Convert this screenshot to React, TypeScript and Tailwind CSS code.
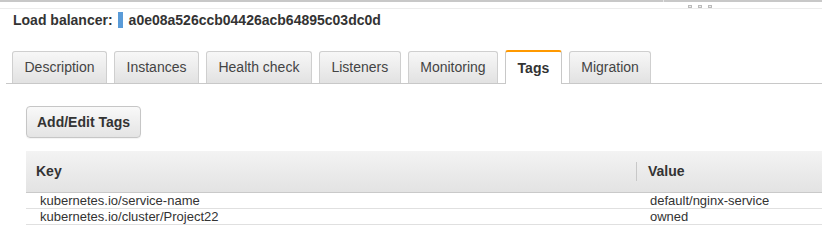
const tabs = ['Description', 'Instances', 'Health check', 'Listeners', 'Monitoring', 'Tags', 'Migration'];

const tags = [
  { key: 'kubernetes.io/service-name', value: 'default/nginx-service' },
  { key: 'kubernetes.io/cluster/Project22', value: 'owned' },
];

export default function App() {
  const active = 'Tags';

  return (
    <div className="w-[822px] h-[247px] overflow-hidden bg-white text-[#333] font-['Liberation_Sans',Arial,sans-serif]">
      {/* top strip with resize grip */}
      <div className="relative h-[9px] border-t-2 border-b border-t-[#c8c8c8] border-b-[#ececec]">
        <div className="absolute left-[663px] -top-[2px] w-px h-[2px] bg-[#e6e6e6]" />
        <div className="absolute left-[688px] top-[3px] flex gap-[6px]">
          <span className="w-[4px] h-[3px] border border-[#bbb] bg-[#eee]" />
          <span className="w-[4px] h-[3px] border border-[#bbb] bg-[#eee]" />
          <span className="w-[4px] h-[3px] border border-[#bbb] bg-[#eee]" />
        </div>
      </div>

      {/* header */}
      <div className="flex items-center h-[22px] pl-[13px] text-[14px] font-bold text-[#333]">
        <span>Load balancer:</span>
        <span className="ml-[5px] w-[5px] h-[16px] bg-[#5a9bd8]" />
        <span className="ml-[6px]">a0e08a526ccb04426acb64895c03dc0d</span>
      </div>

      {/* tabs */}
      <div className="mt-[20px] ml-[6px] pl-[6px] flex items-end gap-[7px] border-b border-[#c8c8c8] h-[33px]">
        {tabs.map((t) =>
          t === active ? (
            <div
              key={t}
              className="h-[34px] -mb-px px-[11.5px] flex items-center bg-white border border-[#c8c8c8] border-t-2 border-t-[#f90] border-b-0 rounded-t-[3px] text-[14px] font-bold text-[#333]"
            >
              {t}
            </div>
          ) : (
            <div
              key={t}
              className="h-[32px] px-[11.5px] flex items-center bg-gradient-to-b from-[#f7f7f7] to-[#e2e2e2] border border-[#cfcfcf] border-b-0 rounded-t-[3px] text-[14px] text-[#444]"
            >
              {t}
            </div>
          )
        )}
      </div>

      {/* content */}
      <div className="pl-[26px]">
        <button className="mt-[22px] h-[32px] px-[10px] rounded-[4px] border border-[#c6c6c6] bg-gradient-to-b from-[#f9f9f9] to-[#e4e4e4] text-[14px] font-bold text-[#333] shadow-[0_1px_1px_rgba(0,0,0,0.05)]">
          Add/Edit Tags
        </button>

        <div className="mt-[13px] w-[810px]">
          <div className="flex h-[42px] items-center border-b border-[#c9c9c9] bg-gradient-to-b from-[#f3f3f3] to-[#e3e3e3] text-[14px] font-bold text-[#333]">
            <div className="w-[610px] pl-[10px]">Key</div>
            <div className="h-[19px] w-px bg-[#c8c8c8]" />
            <div className="pl-[11px]">Value</div>
          </div>
          {tags.map((row) => (
            <div key={row.key} className="flex h-[16px] items-center border-b border-[#e0e0e0] text-[13px] leading-[15px] text-[#333]">
              <div className="w-[611px] pl-[14px]">{row.key}</div>
              <div className="pl-[13px]">{row.value}</div>
            </div>
          ))}
        </div>
      </div>
    </div>
  );
}
